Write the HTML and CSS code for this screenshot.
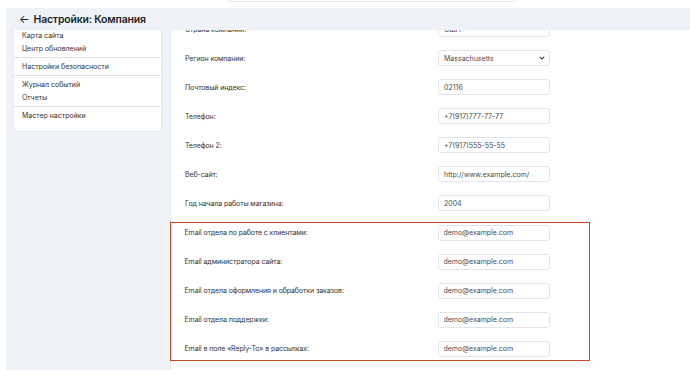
FILE: index.html
```html
<!DOCTYPE html>
<html lang="ru">

<head>
    <meta charset="UTF-8">
    <meta name="viewport" content="width=device-width, initial-scale=1.0">
    <title>Настройки: Компания</title>
    <link rel="stylesheet" href="styles.css">
</head>

<body>
    <div class="topbar">
        <div class="search"></div>
    </div>

    <div class="page">
        <header class="head">
            <span class="back">&larr;</span>
            <h1>Настройки: Компания</h1>
        </header>

        <div class="content">
            <aside class="side">
                <div class="menu">
                    <ul>
                        <li>Карта сайта</li>
                        <li>Центр обновлений</li>
                    </ul>
                    <ul>
                        <li>Настройки безопасности</li>
                    </ul>
                    <ul>
                        <li>Журнал событий</li>
                        <li>Отчеты</li>
                    </ul>
                    <ul>
                        <li>Мастер настройки</li>
                    </ul>
                </div>
            </aside>

            <main class="panel">
                <div class="form">
                    <div class="row">
                        <label>Страна компании:</label>
                        <input type="text" value="США">
                    </div>
                    <div class="row">
                        <label>Регион компании:</label>
                        <span class="select">
                            <select>
                                <option>Massachusetts</option>
                            </select>
                            <svg class="chev" viewBox="0 0 8 5" width="6" height="4">
                                <path d="M1 1l3 3 3-3" fill="none" stroke="#333" stroke-width="1.4" />
                            </svg>
                        </span>
                    </div>
                    <div class="row">
                        <label>Почтовый индекс:</label>
                        <input type="text" value="02116">
                    </div>
                    <div class="row">
                        <label>Телефон:</label>
                        <input type="text" value="+7(917)777-77-77">
                    </div>
                    <div class="row">
                        <label>Телефон 2:</label>
                        <input type="text" value="+7(917)555-55-55">
                    </div>
                    <div class="row">
                        <label>Веб-сайт:</label>
                        <input type="text" value="http://www.example.com/">
                    </div>
                    <div class="row">
                        <label>Год начала работы магазина:</label>
                        <input type="text" value="2004">
                    </div>

                    <div class="marked">
                        <div class="row">
                            <label>Email отдела по работе с клиентами:</label>
                            <input type="text" value="demo@example.com">
                        </div>
                        <div class="row">
                            <label>Email администратора сайта:</label>
                            <input type="text" value="demo@example.com">
                        </div>
                        <div class="row">
                            <label>Email отдела оформления и обработки заказов:</label>
                            <input type="text" value="demo@example.com">
                        </div>
                        <div class="row">
                            <label>Email отдела поддержки:</label>
                            <input type="text" value="demo@example.com">
                        </div>
                        <div class="row">
                            <label>Email в поле «Reply-To» в рассылках:</label>
                            <input type="text" value="demo@example.com">
                        </div>
                    </div>
                </div>
            </main>
        </div>
    </div>
</body>

</html>
```

FILE: styles.css
```css
body {
    font-family: Inter, "Noto Sans", sans-serif;
    background: #fff;
    color: #333;
    margin: 0;
    padding: 0;
    height: 370px;
    overflow: hidden;
}

.topbar {
    height: 8px;
    overflow: hidden;
}

.search {
    width: 290px;
    height: 20px;
    margin: -18px 0 0 228px;
    border: 1px solid #e1e5eb;
    border-radius: 4px;
    box-sizing: border-box;
}

.page {
    margin-left: 6px;
    background: #eff3f8;
    height: 362px;
}

.head {
    height: 22px;
    display: flex;
    align-items: center;
    gap: 4px;
    padding-left: 13px;
}

.back {
    font-size: 11px;
    color: #222;
}

.head h1 {
    margin: 0;
    font-size: 10.5px;
    font-weight: 600;
    letter-spacing: -0.2px;
    color: #1c1f24;
}

.content {
    display: flex;
    height: 340px;
    overflow: hidden;
}

.side {
    width: 164px;
    padding-left: 8px;
    box-sizing: border-box;
}

.menu {
    width: 147px;
    margin-top: -3px;
    padding-bottom: 7px;
    background: #fff;
    border-radius: 0 0 4px 4px;
    box-shadow: 0 0 0 1px #e4e9ef;
}

.menu ul {
    list-style: none;
    margin: 0;
    padding: 2px 0;
}

.menu ul + ul {
    border-top: 1px solid #dde2e8;
}

.menu li {
    font-size: 7px;
    line-height: 13px;
    padding-left: 8px;
}

.panel {
    flex: 1;
    background: #fff;
    border-left: 1px solid #e6eaf0;
}

.form {
    display: flex;
    flex-direction: column;
    gap: 13px;
    margin-top: -9px;
}

.row {
    display: flex;
    align-items: center;
    height: 16px;
    padding-left: 14px;
}

.row label {
    width: 253px;
    font-size: 7px;
    letter-spacing: -0.1px;
}

.row input,
.row select {
    width: 112px;
    height: 16px;
    box-sizing: border-box;
    border: 1px solid #e1e5eb;
    border-radius: 3px;
    background: #fff;
    font-family: inherit;
    font-size: 7px;
    color: #4a4a4a;
    padding: 0 5px;
}

.select {
    position: relative;
    display: flex;
}

.row select {
    appearance: none;
}

.chev {
    position: absolute;
    right: 5px;
    top: 6px;
}

.marked {
    width: 418px;
    margin: -2px 0 0 -1.5px;
    padding: 1.5px 0 3.5px;
    border: 1.5px solid #c4441c;
    display: flex;
    flex-direction: column;
    gap: 13px;
}
```
